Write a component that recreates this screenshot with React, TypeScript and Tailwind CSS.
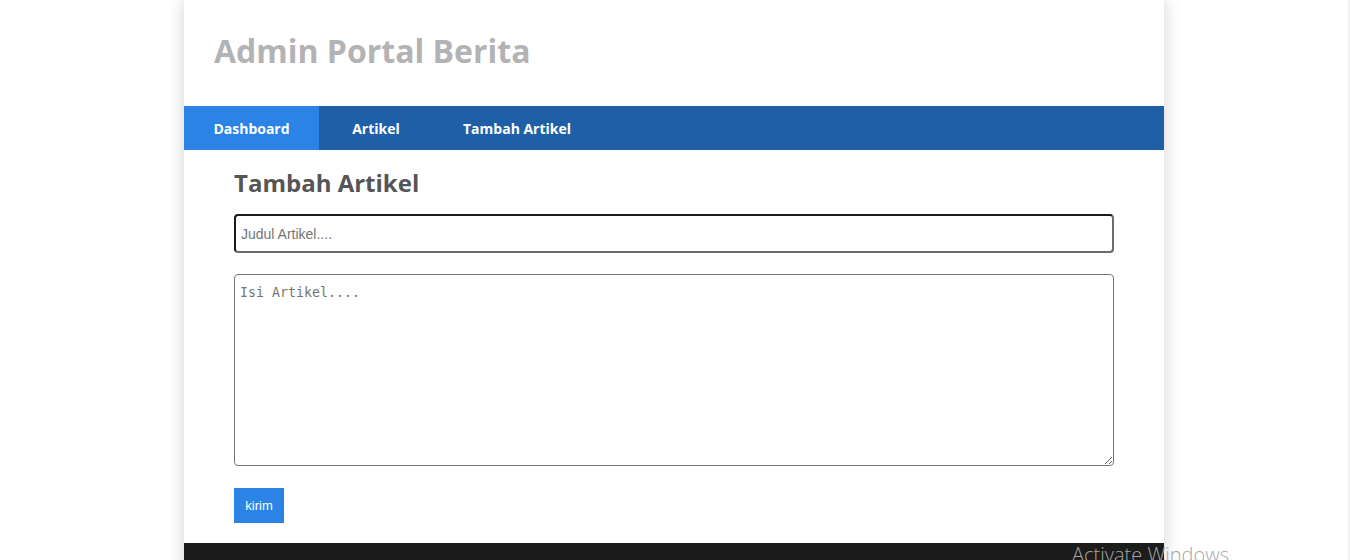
export default function App() {
  return (
    <div className="relative flex h-[560px] w-[1350px] overflow-hidden bg-white">
      <div className="flex w-[1348px] justify-center">
        <div className="flex h-[600px] w-[980px] shrink-0 flex-col bg-white shadow-[0_0_16px_rgba(0,0,0,0.18)]">
          <header className="flex h-[106px] shrink-0 items-center pl-[30px] pb-[4px]">
            <h1 className="text-[32px] font-bold text-[#b3b3b3]" style={{ fontFamily: '"Open Sans", sans-serif' }}>
              Admin Portal Berita
            </h1>
          </header>
          <nav className="flex h-[44px] shrink-0 bg-[#1f5fa8] text-[14px] font-bold text-white" style={{ fontFamily: '"Open Sans", sans-serif' }}>
            <a className="flex w-[135px] items-center justify-center bg-[#2b83e6]">Dashboard</a>
            <a className="flex w-[114px] items-center justify-center">Artikel</a>
            <a className="flex items-center px-[30px]">Tambah Artikel</a>
          </nav>
          <main className="flex shrink-0 flex-col px-[50px] pt-[17px] pb-[20px]">
            <h2 className="text-[24px] font-bold leading-[32px] text-[#555555]" style={{ fontFamily: '"Open Sans", sans-serif' }}>
              Tambah Artikel
            </h2>
            <input
              className="mt-[15px] h-[39px] w-[880px] rounded-[4px] border-2 border-t-[#1b1b1b] border-l-[#1b1b1b] border-r-[#6b6b6b] border-b-[#6b6b6b] px-[5px] text-[14px] text-[#333] outline-none placeholder:text-[#757575]"
              style={{ fontFamily: '"Liberation Sans", Arial, sans-serif' }}
              placeholder="Judul Artikel...."
            />
            <textarea
              className="mt-[21px] h-[192px] w-[880px] shrink-0 rounded-[4px] border border-[#767676] px-[5px] py-[10px] text-[13.3px] leading-[15px] text-[#333] outline-none placeholder:text-[#757575]"
              style={{ fontFamily: '"DejaVu Sans Mono", monospace' }}
              placeholder="Isi Artikel...."
            />
            <div className="mt-[22px]">
              <button
                className="flex h-[35px] w-[50px] items-center justify-center bg-[#2b83e6] text-[13px] text-white"
                style={{ fontFamily: '"Liberation Sans", Arial, sans-serif' }}
              >
                kirim
              </button>
            </div>
          </main>
          <footer className="flex-1 bg-[#1c1c1c]" />
        </div>
      </div>
      <div className="w-[2px] bg-[#f0f0f0]" />
      <div
        className="absolute left-[1072px] top-[540px] text-[20px] text-[#a6a6a6]"
        style={{ fontFamily: '"Open Sans", "Noto Sans", sans-serif', fontWeight: 300 }}
      >
        Activate Windows
      </div>
    </div>
  );
}
